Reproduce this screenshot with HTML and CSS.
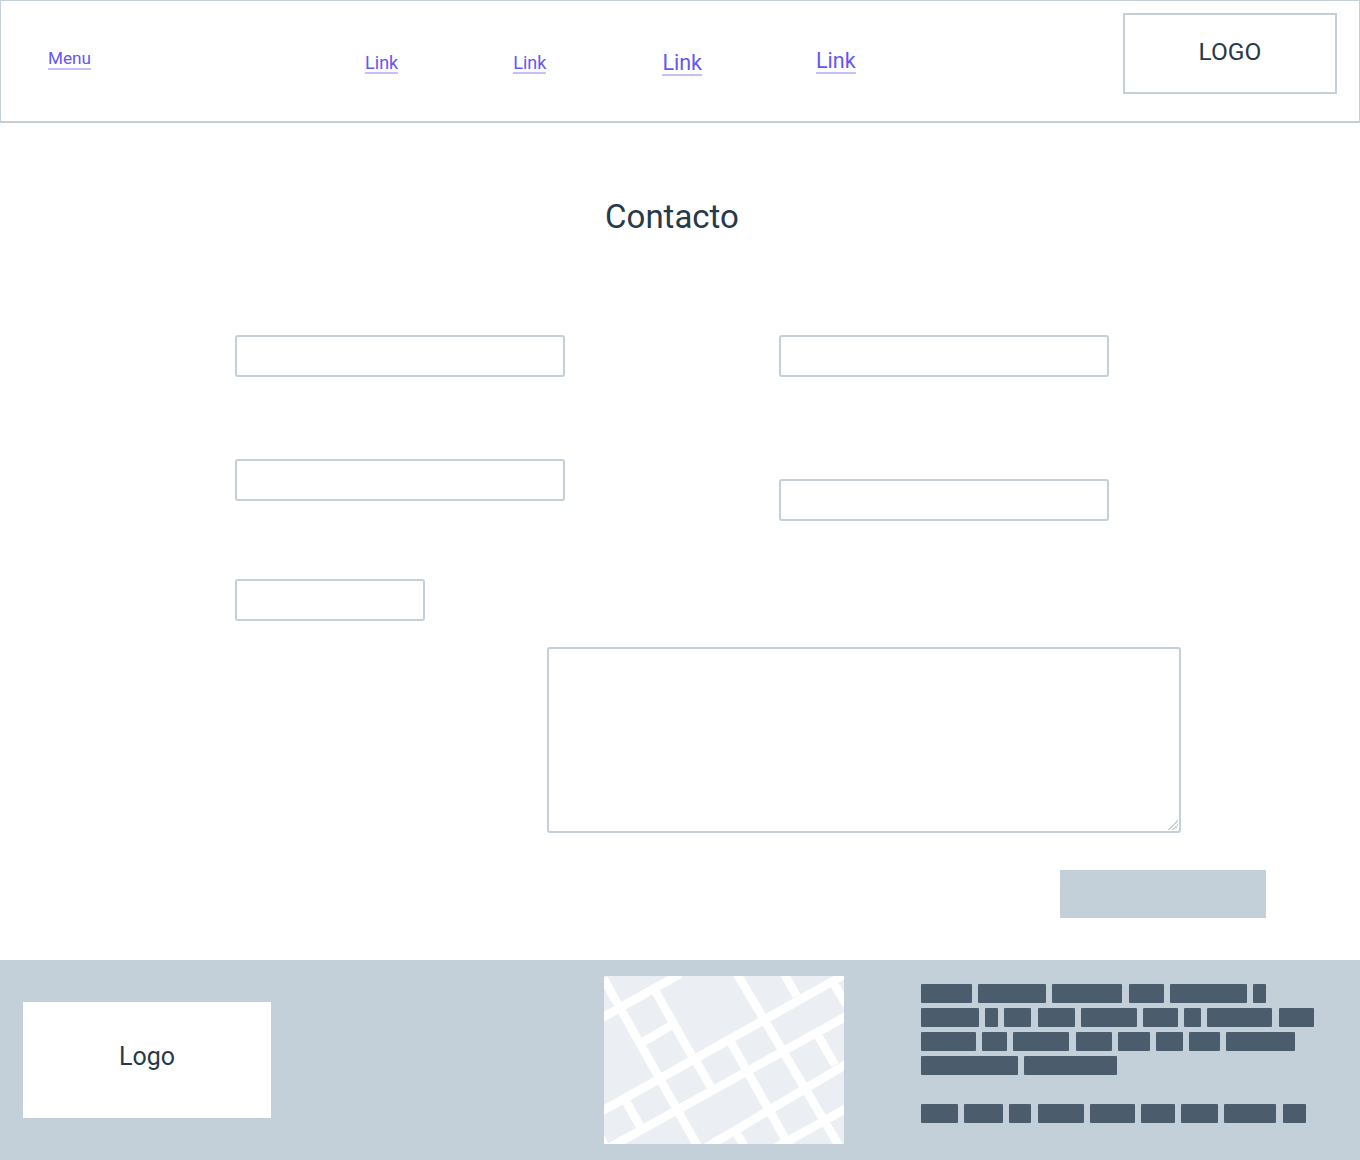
FILE: index.html
```html
<!DOCTYPE html>
<html lang="es">
<head>
  <meta charset="UTF-8" />
  <meta name="viewport" content="width=device-width, initial-scale=1.0"/>
  <title>Contacto</title>
  <link rel="stylesheet" href="styles.css">
</head>
<body>
  <header class="topbar">
    <a class="link menu-link" href="#">Menu</a>
    <nav class="nav">
      <a class="link nav-1" href="#">Link</a>
      <a class="link nav-2" href="#">Link</a>
      <a class="link link-big nav-3" href="#">Link</a>
      <a class="link link-big nav-4" href="#">Link</a>
    </nav>
    <div class="logo-box">LOGO</div>
  </header>

  <main class="content">
    <h1 class="title">Contacto</h1>
    <form class="contact-form">
      <div class="fields">
        <div class="col col-left">
          <input class="field" type="text" />
          <input class="field" type="text" />
          <input class="field field-short" type="text" />
        </div>
        <div class="col col-right">
          <input class="field" type="text" />
          <input class="field" type="text" />
        </div>
      </div>
      <textarea class="message"></textarea>
      <button class="send" type="button"></button>
    </form>
  </main>

  <footer class="footer">
    <div class="footer-logo">Logo</div>
    <svg class="map" viewBox="12 18 720 504" width="240" height="168">
      <rect x="12" y="18" width="720" height="504" fill="#ebeef3" />
      <g stroke="#fff" stroke-width="26" fill="none">
        <path d="M0 147 L240 12" />
        <path d="M0 427 L740 10" />
        <path d="M30 532 L740 138" />
        <path d="M320 532 L740 282" />
        <path d="M530 532 L740 415" />
        <path d="M125 218 L212 167" />
        <path d="M10 25 L295 532" />
        <path d="M165 62 L275 256" />
        <path d="M410 10 L720 532" />
        <path d="M552 10 L590 78" />
        <path d="M285 268 L337 358" />
        <path d="M390 212 L570 532" />
        <path d="M78 395 L128 482" />
        <path d="M655 198 L705 285" />
        <path d="M403 478 L435 532" />
        <path d="M698 35 L740 105" />
        <path d="M-3 495 L17 532" />
      </g>
    </svg>
    <div class="footer-text">
      <div class="bars">
        <span class="bar" style="width:51px"></span><span class="bar" style="width:68px"></span><span class="bar" style="width:70px"></span><span class="bar" style="width:35px"></span><span class="bar" style="width:77px"></span><span class="bar" style="width:13px"></span>
        <span class="bar" style="width:58px"></span><span class="bar" style="width:13px"></span><span class="bar" style="width:27px"></span><span class="bar" style="width:37px"></span><span class="bar" style="width:56px"></span><span class="bar" style="width:35px"></span><span class="bar" style="width:17px"></span><span class="bar" style="width:65px"></span><span class="bar" style="width:35px"></span>
        <span class="bar" style="width:55px"></span><span class="bar" style="width:25px"></span><span class="bar" style="width:56px"></span><span class="bar" style="width:36px"></span><span class="bar" style="width:32px"></span><span class="bar" style="width:27px"></span><span class="bar" style="width:31px"></span><span class="bar" style="width:69px"></span>
        <span class="bar" style="width:97px"></span><span class="bar" style="width:93px"></span>
      </div>
      <div class="bars">
        <span class="bar" style="width:37px"></span><span class="bar" style="width:39px"></span><span class="bar" style="width:22px"></span><span class="bar" style="width:46px"></span><span class="bar" style="width:45px"></span><span class="bar" style="width:34px"></span><span class="bar" style="width:37px"></span><span class="bar" style="width:52px"></span><span class="bar" style="width:23px"></span>
      </div>
    </div>
  </footer>
</body>
</html>
```

FILE: styles.css
```css
* {
  box-sizing: border-box;
}
body {
  margin: 0;
  background: white;
  color: #273a4b;
  font-family: Roboto, "Liberation Sans", sans-serif;
}
.topbar {
  display: flex;
  align-items: flex-start;
  height: 123px;
  border: 1px solid #c3cfd9;
  border-bottom-width: 2px;
}
.link {
  color: #6457f5;
  text-decoration: none;
  border-bottom: 2px solid #c6c0fa;
  font-size: 18px;
  line-height: 19px;
}
.link-big {
  font-size: 21.5px;
  line-height: 22px;
}
.menu-link {
  margin: 48px 0 0 47px;
  font-size: 17.2px;
}
.nav {
  display: flex;
  align-items: flex-start;
  margin-left: 274px;
}
.nav-1 {
  margin-top: 52px;
}
.nav-2 {
  margin: 52px 0 0 115px;
}
.nav-3 {
  margin: 51px 0 0 116px;
}
.nav-4 {
  margin: 49px 0 0 114px;
}
.logo-box {
  display: flex;
  align-items: center;
  justify-content: center;
  width: 214px;
  height: 81px;
  margin: 12px 22px 0 auto;
  padding-bottom: 4px;
  border: 2px solid #c3cfd9;
  font-size: 24.5px;
}
.content {
  height: 837px;
}
.title {
  margin: 0;
  padding: 74px 16px 0 0;
  text-align: center;
  font-size: 33px;
  font-weight: 400;
  line-height: 40px;
}
.contact-form {
  padding-top: 98px;
}
.fields {
  display: flex;
  gap: 214px;
  padding-left: 235px;
}
.col {
  display: flex;
  flex-direction: column;
  align-items: flex-start;
}
.col-left {
  gap: 78px;
}
.col-right {
  gap: 102px;
}
.field {
  display: block;
  width: 330px;
  height: 42px;
  border: 2px solid #c3cfd9;
  border-radius: 3px;
  background: white;
}
.col-left .field:nth-child(2) {
  margin-top: 4px;
}
.col-left .field-short {
  width: 190px;
}
.message {
  display: block;
  width: 634px;
  height: 186px;
  margin: 26px 0 0 547px;
  border: 2px solid #c3cfd9;
  border-radius: 3px;
  background: white;
}
.message::-webkit-resizer {
  background: linear-gradient(135deg, transparent 46%, #c3cfd9 46% 56%, transparent 56% 70%, #c3cfd9 70% 80%, transparent 80%) right 1px bottom 1px / 10px 10px no-repeat;
}
.send {
  display: block;
  width: 206px;
  height: 48px;
  margin: 37px 0 0 1060px;
  border: 0;
  background: #c3cfd9;
}
.footer {
  display: flex;
  align-items: flex-start;
  height: 200px;
  background: #c3cfd9;
}
.footer-logo {
  display: flex;
  align-items: center;
  justify-content: center;
  width: 248px;
  height: 116px;
  margin: 42px 0 0 23px;
  padding-bottom: 8px;
  background: white;
  font-size: 25px;
}
.map {
  display: block;
  margin: 16px 0 0 333px;
}
.footer-text {
  width: 400px;
  margin: 24px 0 0 77px;
}
.bars {
  display: flex;
  flex-wrap: wrap;
  gap: 5px 6.2px;
  margin-bottom: 29px;
}
.bar {
  height: 19px;
  background: #4b5d6c;
  border-radius: 1px;
}
```
